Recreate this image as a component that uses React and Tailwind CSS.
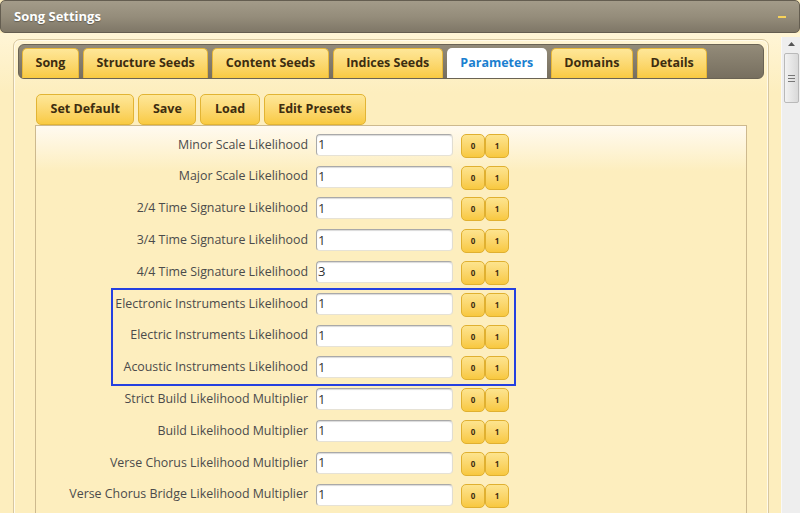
import React from 'react';

const tabs = ['Song', 'Structure Seeds', 'Content Seeds', 'Indices Seeds', 'Parameters', 'Domains', 'Details'];
const actions = ['Set Default', 'Save', 'Load', 'Edit Presets'];

const rows = [
  ['Minor Scale Likelihood', '1'],
  ['Major Scale Likelihood', '1'],
  ['2/4 Time Signature Likelihood', '1'],
  ['3/4 Time Signature Likelihood', '1'],
  ['4/4 Time Signature Likelihood', '3'],
  ['Electronic Instruments Likelihood', '1'],
  ['Electric Instruments Likelihood', '1'],
  ['Acoustic Instruments Likelihood', '1'],
  ['Strict Build Likelihood Multiplier', '1'],
  ['Build Likelihood Multiplier', '1'],
  ['Verse Chorus Likelihood Multiplier', '1'],
  ['Verse Chorus Bridge Likelihood Multiplier', '1'],
];

function Row({ label, value }) {
  return (
    <div className="h-[31.8px] flex items-center shrink-0">
      <span className="w-[272px] text-right text-[12.4px] text-[#4b4b4b]">{label}</span>
      <div className="ml-[8px] w-[137px] h-[22px] bg-white rounded-[4px] border border-[#a9a9a9] border-b-[#e6e2d6] border-r-[#e0ddd2] shadow-[inset_0_1px_1px_rgba(0,0,0,0.15)] flex items-center pl-[1px] text-[13px] text-[#333]">
        {value}
      </div>
      <div className="ml-[8px] mt-[2px] flex">
        <button className="w-[24px] h-[24px] rounded-[5px] border border-[#e0b030] bg-gradient-to-b from-[#fde48e] to-[#f8c83e] text-[8px] font-bold text-[#3d2d10]">0</button>
        <button className="w-[24px] h-[24px] rounded-[5px] border border-[#e0b030] bg-gradient-to-b from-[#fde48e] to-[#f8c83e] text-[8px] font-bold text-[#3d2d10]">1</button>
      </div>
    </div>
  );
}

export default function App() {
  return (
    <div className="w-[800px] h-[513px] overflow-hidden bg-[#fdeebe] flex flex-col font-['Open_Sans',sans-serif]">
      <div className="h-[33px] shrink-0 rounded-[5px] border border-[#645d50] bg-gradient-to-b from-[#a39b89] via-[#958d7b] to-[#7f7767] flex items-center justify-between px-[13px]">
        <span className="text-white font-bold text-[13px] [text-shadow:0_1px_1px_rgba(0,0,0,0.3)]">Song Settings</span>
        <span className="w-[8px] h-[2px] bg-[#f7d25a]"></span>
      </div>
      <div className="flex-1 flex min-h-0 bg-gradient-to-b from-[#fff5d6] to-[#fdeebe] to-[60px]">
        <div className="flex-1 pl-[13px] pt-[6px] pr-[12px] min-w-0">
          <div className="h-[500px] rounded-t-[7px] border border-[#d8c79f] shadow-[inset_0_0_0_1px_#fffaea] p-[4px] flex flex-col">
            <div className="h-[35px] shrink-0 rounded-[6px] bg-gradient-to-b from-[#938b79] to-[#776f5f] border border-[#6a6354] flex items-end px-[3px] gap-[4px]">
              {tabs.map((t) =>
                t === 'Parameters' ? (
                  <div key={t} className="h-[30px] px-[13.5px] rounded-t-[5px] bg-white flex items-center text-[12.5px] font-bold text-[#1b7fd0]">{t}</div>
                ) : (
                  <div key={t} className="h-[30px] px-[12.5px] rounded-t-[5px] border border-b-0 border-[#e8b838] bg-gradient-to-b from-[#fee798] to-[#f9ca40] flex items-center text-[12.5px] font-bold text-[#3d2d10]">{t}</div>
                )
              )}
            </div>
            <div className="pl-[18px] pt-[15px] flex gap-[4px]">
              {actions.map((a) => (
                <div key={a} className="h-[31px] px-[13.5px] rounded-[5px] border border-[#e2b434] bg-gradient-to-b from-[#fee798] to-[#f9ca40] flex items-center text-[12.5px] font-bold text-[#3d2d10]">{a}</div>
              ))}
            </div>
            <div className="ml-[17px] mr-[17px] flex-1 border border-[#cdb98e] bg-gradient-to-b from-[#fffaf0] to-[#fdeebe] to-[45px] pt-[3px] flex flex-col relative">
              {rows.map(([l, v]) => (
                <Row key={l} label={l} value={v} />
              ))}
              <div className="absolute left-[75px] top-[162px] w-[405px] h-[98px] border-2 border-[#2540e0] pointer-events-none"></div>
            </div>
          </div>
        </div>
        <div className="w-[19px] shrink-0 mt-[4px] bg-[#eeeeee] border-l border-[#f8f8f8] flex flex-col items-center">
          <div className="h-[14px] flex items-center justify-center">
            <svg width="7" height="4" viewBox="0 0 7 4"><path d="M0 4 L3.5 0 L7 4 Z" fill="#555" /></svg>
          </div>
          <div className="w-[15px] h-[50px] mt-[2px] rounded-[2px] border border-[#b9b9b9] bg-gradient-to-r from-[#f2f2f2] to-[#d9d9d9] flex flex-col items-center justify-center gap-[2px]">
            <div className="w-[7px] h-[1px] bg-[#777]"></div>
            <div className="w-[7px] h-[1px] bg-[#777]"></div>
            <div className="w-[7px] h-[1px] bg-[#777]"></div>
          </div>
        </div>
      </div>
    </div>
  );
}
